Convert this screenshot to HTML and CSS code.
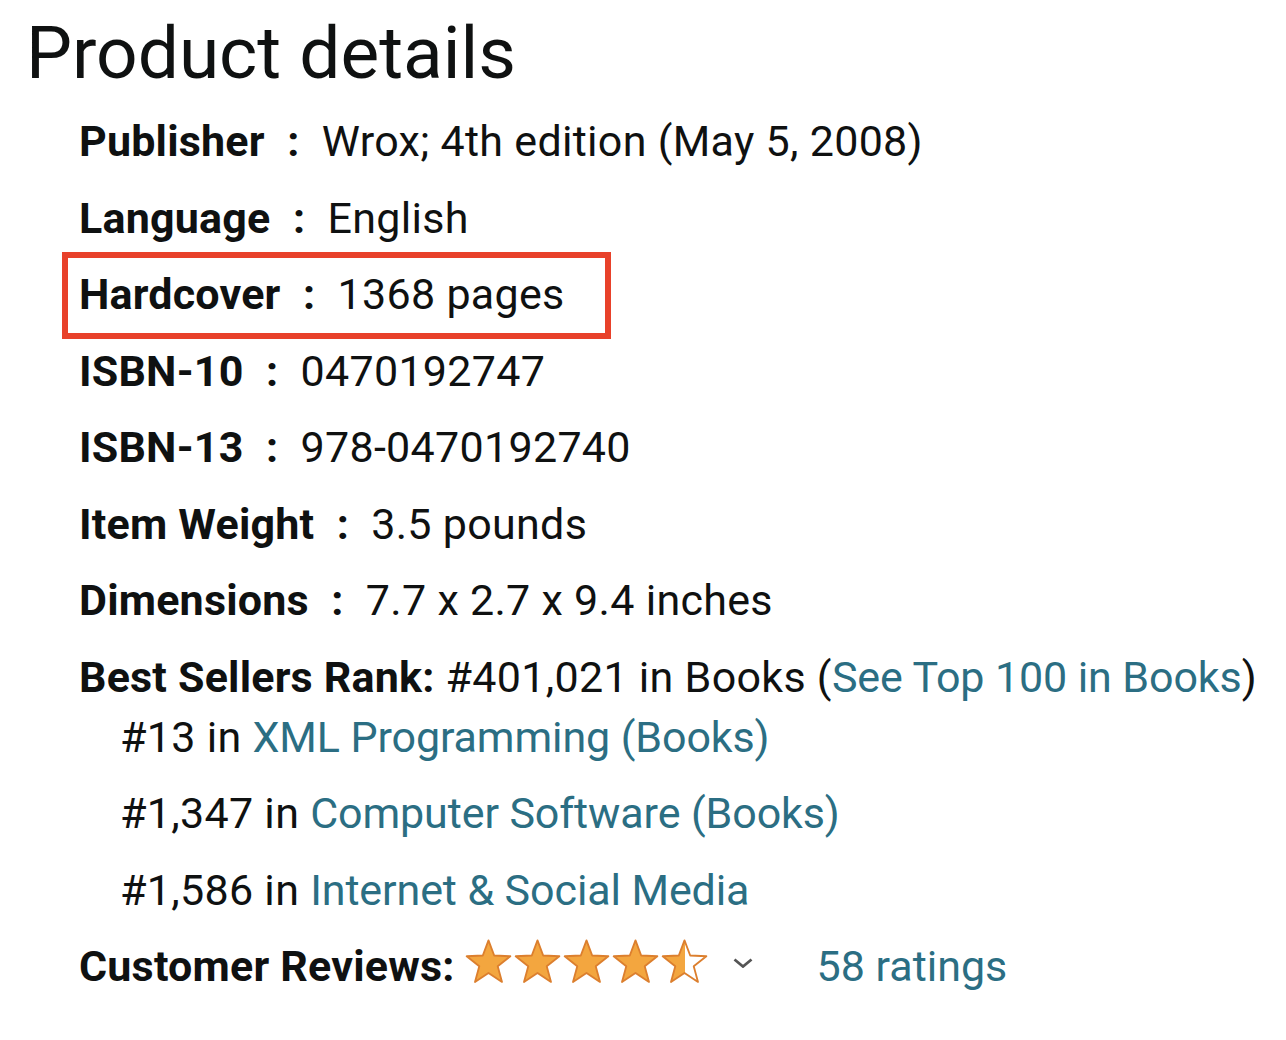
FILE: index.html
```html
<!DOCTYPE html>
<html lang="en">
<head>
<meta charset="utf-8">
<title>Product details</title>
<link rel="stylesheet" href="styles.css">
</head>
<body>
<div class="page">
  <h1 class="title">Product details</h1>
  <ul class="details">
    <li class="row"><span class="k">Publisher</span><span class="sep">:</span><span class="v">Wrox; 4th edition (May 5, 2008)</span></li>
    <li class="row"><span class="k">Language</span><span class="sep">:</span><span class="v">English</span></li>
    <li class="row boxed-row"><span class="boxed"><span class="k">Hardcover</span><span class="sep">:</span><span class="v">1368 pages</span></span></li>
    <li class="row"><span class="k">ISBN-10</span><span class="sep">:</span><span class="v">0470192747</span></li>
    <li class="row"><span class="k">ISBN-13</span><span class="sep">:</span><span class="v">978-0470192740</span></li>
    <li class="row"><span class="k">Item Weight</span><span class="sep">:</span><span class="v">3.5 pounds</span></li>
    <li class="row"><span class="k">Dimensions</span><span class="sep">:</span><span class="v">7.7 x 2.7 x 9.4 inches</span></li>
  </ul>
  <ul class="details">
    <li class="rank">
      <div class="row"><span class="k">Best Sellers Rank:</span> #401,021 in Books (<a class="link" href="#">See Top 100 in Books</a>)</div>
      <ul class="sub">
        <li class="row">#13 in <a class="link" href="#">XML Programming (Books)</a></li>
        <li class="row">#1,347 in <a class="link" href="#">Computer Software (Books)</a></li>
        <li class="row">#1,586 in <a class="link" href="#">Internet &amp; Social Media</a></li>
      </ul>
    </li>
    <li class="row reviews">
      <span class="k">Customer Reviews:</span>
      <span class="stars" aria-label="4.5 out of 5 stars">
        <svg class="star" viewBox="0 0 48 46"><path class="sf" d="M24 2.3L29.58 17.11 45.4 17.85 33.04 27.74 37.23 43 24 34.3 10.77 43 14.96 27.74 2.6 17.85 18.42 17.11Z"/></svg>
        <svg class="star" viewBox="0 0 48 46"><path class="sf" d="M24 2.3L29.58 17.11 45.4 17.85 33.04 27.74 37.23 43 24 34.3 10.77 43 14.96 27.74 2.6 17.85 18.42 17.11Z"/></svg>
        <svg class="star" viewBox="0 0 48 46"><path class="sf" d="M24 2.3L29.58 17.11 45.4 17.85 33.04 27.74 37.23 43 24 34.3 10.77 43 14.96 27.74 2.6 17.85 18.42 17.11Z"/></svg>
        <svg class="star" viewBox="0 0 48 46"><path class="sf" d="M24 2.3L29.58 17.11 45.4 17.85 33.04 27.74 37.23 43 24 34.3 10.77 43 14.96 27.74 2.6 17.85 18.42 17.11Z"/></svg>
        <svg class="star" viewBox="0 0 48 46"><defs><linearGradient id="half" gradientUnits="userSpaceOnUse" x1="0" x2="48" y1="0" y2="0"><stop offset="0.5" stop-color="#f3a63f"/><stop offset="0.5" stop-color="#ffffff"/></linearGradient></defs><path class="sh" d="M24 2.3L29.58 17.11 45.4 17.85 33.04 27.74 37.23 43 24 34.3 10.77 43 14.96 27.74 2.6 17.85 18.42 17.11Z"/></svg>
      </span>
      <svg class="chev" viewBox="0 0 20 10"><path d="M1.5 1.5l8.5 7 8.5-7"/></svg>
      <a class="link ratings" href="#">58 ratings</a>
    </li>
  </ul>
</div>
</body>
</html>
```

FILE: styles.css
```css
* { box-sizing: border-box; }
html, body { margin: 0; padding: 0; background: #ffffff; }
body {
  font-family: Roboto, "Liberation Sans", Arial, sans-serif;
  color: #0f1111;
}
.page { padding-top: 18px; }
.title {
  margin: 0 0 14px 0;
  padding-left: 26px;
  font-size: 73px;
  line-height: 71px;
  font-weight: 400;
  letter-spacing: 0;
}
.details {
  list-style: none;
  margin: 0;
  padding: 0 0 0 79px;
}
.row {
  font-size: 43px;
  line-height: 76.5px;
  height: 76.5px;
  white-space: nowrap;
  letter-spacing: 0.3px;
}
.k { font-weight: 700; letter-spacing: 0.2px; }
.sep {
  display: inline-block;
  width: 57px;
  text-align: center;
  font-weight: 700;
  letter-spacing: 0;
}
.boxed-row { height: auto; }
.boxed {
  display: block;
  width: fit-content;
  margin: -4.2px 0 -6.3px -17px;
  padding: 0 40px 2px 11px;
  line-height: 73px;
  border: 6px solid #e8412a;
}
.link { color: #2b6e83; text-decoration: none; letter-spacing: -0.1px; }
.rank { margin: 0; }
.sub {
  list-style: none;
  margin: -16.5px 0 0 0;
  padding: 0 0 0 41px;
}
.reviews {
  display: flex;
  align-items: center;
}
.stars {
  display: inline-flex;
  margin-left: 9px;
  margin-bottom: 9px;
}
.star { width: 49px; height: 47px; display: block; flex: none; }
.sf { fill: #f3a63f; stroke: #dc7f2e; stroke-width: 1.8; stroke-linejoin: round; }
.sh { fill: url(#half); stroke: #dc7f2e; stroke-width: 1.8; stroke-linejoin: round; }
.chev {
  width: 20px; height: 10px;
  margin-left: 24px;
  margin-bottom: 7px;
  fill: none; stroke: #555555; stroke-width: 2.8;
  flex: none;
}
.ratings { margin-left: 64px; letter-spacing: 0; }
```
